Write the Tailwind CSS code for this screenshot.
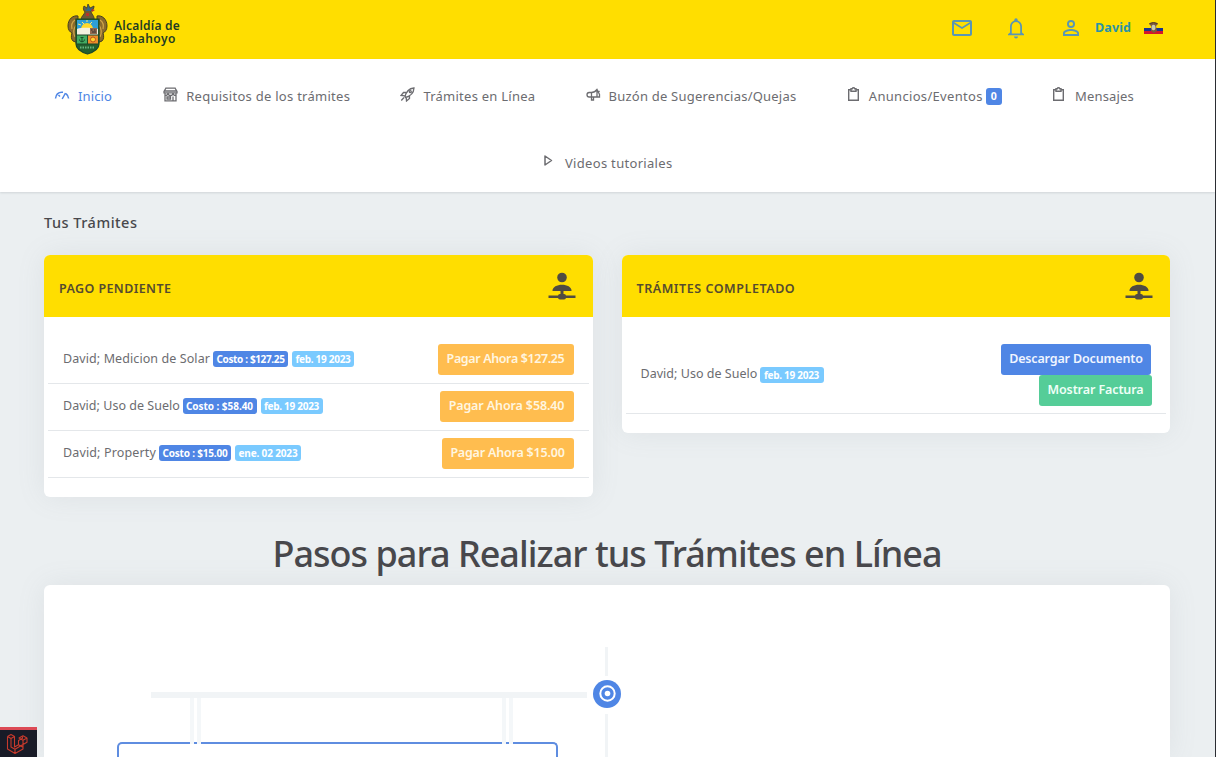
<!DOCTYPE html>
<html lang="es">
<head>
<meta charset="utf-8">
<title>Alcaldía de Babahoyo</title>
<script src="https://cdn.jsdelivr.net/npm/@tailwindcss/browser@4"></script>
</head>
<body class="w-[1216px] h-[757px] overflow-hidden bg-[#ebeff1] border-r border-[#2b2d33] font-['Noto_Sans',sans-serif] text-[#6c6c70] relative whitespace-nowrap">
<header class="h-[59px] bg-[#ffde00] flex items-center pl-[67px] pr-[52px] justify-between">
  <div class="flex items-center h-full">
    <svg class="w-[41px] h-[52px] -mt-[2px]" viewBox="0 0 41 52">
      <path d="M11 13C6 12 1 16 1 23c0 4 2 6 4 7-1 3-1 6 1 8l5 2V20zM30 13c5-1 10 3 10 10 0 4-2 6-4 7 1 3 1 6-1 8l-5 2V20z" fill="#8a6a2c" stroke="#46401f" stroke-width="1"/>
      <path d="M8 17c-3 2-4 5-3 9M9 22c-2 3-3 8-1 12M33 17c3 2 4 5 3 9M32 22c2 3 3 8 1 12" fill="none" stroke="#d0a649" stroke-width="1.2"/>
      <path d="M14 17c0-4 3-5 4-8-2-2-2-4-1-6l3 2 1-4 2 4 4-2c0 3-1 4-3 5 0 3 4 5 3 9z" fill="#6d5a35" stroke="#3c3826" stroke-width=".8"/>
      <path d="M17 4l3 3 1-5 2 4 3-2-2 4h-5z" fill="#2d6a8d"/><path d="M24 6l4 1-3 2zM19 10h3v3h-3z" fill="#b8332a"/>
      <path d="M9 16h23v25c0 5-5 8-11.500 10C14 49 9 46 9 41z" fill="#23602f" stroke="#1d4729" stroke-width="1.200"/>
      <path d="M10 17h21v14H10z" fill="#2d9fd7"/>
      <path d="M14 26a6 6 0 0 1 12 0z" fill="#ffd92b"/><path d="M15 19l2 2M11 21l3 1M20 17v2M25 19l-2 2" stroke="#ffe674" stroke-width="1"/>
      <path d="M10 26c6-2 14-1 21 0v6H10z" fill="#f3f0df"/><path d="M23 25h7v6h-7z" fill="#91694f"/><path d="M24 27h1.500M27 27h1.500M25 29h4" stroke="#333"/>
      <path d="M10 32h10.500v9H10z" fill="#42ac62"/><path d="M21 32h10v9H21z" fill="#ee8c2a"/>
      <circle cx="26" cy="36.500" r="2.500" fill="#ffd22d" stroke="#b5541b"/>
      <path d="M15 34v5M12.500 36.500c0 3 5 3 5 0M13.500 34.500h3" fill="none" stroke="#174c27"/>
      <path d="M9.500 32h22M20.500 32v9M9.500 41h22" stroke="#1d4729"/>
      <path d="M13 44.500h15" stroke="#69b580" stroke-width="2" stroke-dasharray="1.500 1"/>
    </svg>
    <div class="ml-[6px] mt-[5px] text-[12px] leading-[13px] font-semibold text-[#1f3d24]">
      <div class="tracking-[0.23px]">Alcaldía de</div>
      <div class="tracking-[0.44px]">Babahoyo</div>
    </div>
  </div>
  <div class="flex items-center h-full pb-[4px] text-[#5a96b4]">
    <svg class="size-6 mr-[30px]" viewBox="0 0 24 24" fill="currentColor"><path d="M22 6c0-1.100-.9-2-2-2H4c-1.100 0-2 .9-2 2v12c0 1.100.9 2 2 2h16c1.100 0 2-.9 2-2V6zm-2 0l-8 5-8-5h16zm0 12H4V8l8 5 8-5v10z"/></svg>
    <svg class="size-6 mr-[31px]" viewBox="0 0 24 24" fill="currentColor"><path d="M10 20.500h4a2 2 0 0 1-4 0zm10-2.300v1H4v-1l2-1.800v-5.800c0-3 1.800-5.400 4.300-6.200V4a1.700 1.700 0 0 1 3.400 0v.4c2.500.8 4.300 3.200 4.300 6.200v5.800zm-3.800-7.600a4.200 4.600 0 0 0-8.400 0v6.900h8.400v-6.900z"/></svg>
    <svg class="size-6 mr-[12px]" viewBox="0 0 24 24" fill="currentColor"><path d="M12 4a4 4 0 1 1 0 8 4 4 0 0 1 0-8zm0 1.900a2.100 2.100 0 1 0 0 4.200 2.100 2.100 0 0 0 0-4.200zM12 13c2.700 0 8 1.300 8 4v3H4v-3c0-2.700 5.300-4 8-4zm0 1.900c-3 0-6.100 1.500-6.100 2.100v1.100h12.200V17c0-.6-3.100-2.100-6.100-2.100z"/></svg>
    <span class="w-[49px] text-[12.5px] leading-4 font-bold tracking-[0.12px] text-[#2a93a6]">David</span>
    <svg class="w-[19px] h-[14px] mt-[1px]" viewBox="0 0 19 14"><path d="M0 7h19v4H0z" fill="#17348f"/><path d="M0 10h19v3H0z" fill="#d3162d"/><path d="M5 3c1-2 8-2 9 0l-2 2 1 5-3 2-3-2V5z" fill="#7c5b3b"/><ellipse cx="9.500" cy="6.500" rx="2" ry="2.800" fill="#c8cbb3"/><path d="M5.500 2.500L9.500 1.500l4 1" stroke="#4c3526" fill="none"/></svg>
  </div>
</header>

<nav class="h-[133px] bg-white shadow-[0_1px_2px_rgba(56,65,74,.15)] text-[13px] leading-5">
  <div class="h-[74px] flex items-center justify-between pl-[54px] pr-[80px]">
    <a class="flex items-center text-[#4f86e5]">
      <svg class="w-4 h-4 mr-2 -mt-[3px]" viewBox="0 0 16 16" fill="none" stroke="currentColor" stroke-width="1.500"><path d="M1.500 11.500C2 7 5 4.800 9 5.200M12 6.600c1.500 1.200 2.400 2.800 2.600 4.900M4.500 8l1.500 1.500M8.200 12l3.300-6"/></svg>
      <span class="w-[34px] tracking-[0.12px]">Inicio</span></a>
    <a class="flex items-center ml-px">
      <svg class="w-[15px] h-[15px] mr-2 -mt-[3px]" viewBox="0 0 15 15" fill="none" stroke="currentColor" stroke-width="1.300"><path d="M2.500 1.200h10M3 1L1 4.500v1.300h13V4.500L12 1M1 4h13M2 6v7.800h11V6M2 8.500c2 0 3-1 3-2.500 0 1.500 1 2.500 2.500 2.500S10 7.500 10 6c0 1.500 1 2.500 3 2.500M4 10h3.500v2H4zM10 13.500v-4"/></svg>
      <span class="w-[164px] tracking-[0.27px]">Requisitos de los trámites</span></a>
    <a class="flex items-center">
      <svg class="w-[15px] h-[15px] mr-[8px] -mt-[3px]" viewBox="0 0 15 15" fill="none" stroke="currentColor" stroke-width="1.300"><path d="M5 9.800C6 5 9 1.500 14 1c-.3 5-3.800 8.200-8.500 9.500zM6 5.500H3.500L1 8.500l4 .3M9.500 9v2.500L6.500 14l-.3-3.500M4 10.500L1.300 13.500"/><circle cx="10.300" cy="4.700" r="1"/></svg>
      <span class="w-[112px] tracking-[0.25px]">Trámites en Línea</span></a>
    <a class="flex items-center">
      <svg class="w-[15px] h-[14px] mr-[8px] -mt-[3px]" viewBox="0 0 15 14" fill="none" stroke="currentColor" stroke-width="1.300"><path d="M5.500 4.500H3.200C1.800 4.500 1 5.500 1 6.800S1.800 9 3.200 9h10.300V6.500L11 1.500C9.500 3.500 7.800 4.500 5.500 4.500zM5.500 4.500V12h2V9M11 1.500V9M12.500 4l1-1"/></svg>
      <span class="w-[188px] tracking-[0.22px]">Buzón de Sugerencias/Quejas</span></a>
    <a class="flex items-center">
      <svg class="w-[13px] h-[15px] mr-[9px] -mt-[3px]" viewBox="0 0 13 15" fill="none" stroke="currentColor" stroke-width="1.400"><path d="M4 2.700H1.700v10.600h9.600V2.700H9M4 1.700h1.300c.3-1.200 2.100-1.200 2.400 0H9v2.600H4z"/></svg>
      <span class="w-[117px] tracking-[0.32px]">Anuncios/Eventos</span>
      <span class="w-4 h-[17px] rounded-[3px] bg-[#4f86e5] text-white text-[10.5px] leading-[17px] font-bold text-center mt-px">0</span></a>
    <a class="flex items-center">
      <svg class="w-[13px] h-[15px] mr-[10px] -mt-[3px]" viewBox="0 0 13 15" fill="none" stroke="currentColor" stroke-width="1.400"><path d="M4 2.700H1.700v10.600h9.600V2.700H9M4 1.700h1.300c.3-1.200 2.100-1.200 2.400 0H9v2.600H4z"/></svg>
      <span class="w-[60px] tracking-[0.18px]">Mensajes</span></a>
  </div>
  <div class="h-[59px] flex items-center pl-[543px]">
    <svg class="w-[11px] h-[13px] mr-[11px] -mt-[4px]" viewBox="0 0 11 13" fill="none" stroke="currentColor" stroke-width="1.500" stroke-linejoin="round"><path d="M2 2v9l6.500-4.500z"/></svg>
    <span class="tracking-[0.31px]">Videos tutoriales</span>
  </div>
</nav>

<main class="pl-[44px] pr-[45px]">
  <h4 class="h-[63px] flex items-center pb-[2px] text-[14.5px] font-medium tracking-[0.5px] text-[#48484c]">Tus Trámites</h4>
  <div class="grid grid-cols-2 gap-[29px] items-start text-[12.5px] leading-5">
    <section class="h-[242px] rounded-[6px] bg-white overflow-hidden shadow-[0_0_28px_rgba(130,138,150,.12)]">
      <div class="h-[62px] bg-[#ffde00] flex items-center justify-between pl-[15px] pr-[17px] text-[#554b2f]">
        <h5 class="mt-[5px] font-semibold tracking-[0.4px]">PAGO PENDIENTE</h5>
        <svg class="w-[28px] h-[28px] text-[#504c42]" viewBox="0 0 28 28" fill="currentColor"><circle cx="14" cy="5.500" r="4.800"/><path d="M4.500 18.500C4.500 15 9 12.700 14 12.700s9.500 2.300 9.500 5.800v.5h-19zM12.500 18h3v5h-3zM.5 23.500h27v2.500H.5z"/><rect x="10" y="22" width="8" height="5.500" rx="2"/></svg>
      </div>
      <div class="mt-[20px] mx-[4px]">
        <div class="h-[47px] border-b border-[#e4e7ea] flex items-start pt-[7px] pl-[15px] pr-[15px]">
          <span class="w-[150px] mt-[5px] tracking-[0.09px]">David; Medicion de Solar</span>
          <span class="w-[75px] h-4 mt-[7px] mr-[4px] rounded-[3px] bg-[#4f86e5] text-white text-[10px] leading-4 font-bold text-center tracking-[-0.36px]">Costo : $127.25</span>
          <span class="w-[62px] h-4 mt-[7px] rounded-[3px] bg-[#7acaff] text-white text-[10px] leading-4 font-bold text-center tracking-[-0.29px]">feb. 19 2023</span>
          <button class="ml-auto w-[136px] h-[31px] rounded-[3px] bg-[#ffbd4f] text-[#fff6e0] font-semibold leading-[29px] pb-[2px] tracking-[-0.38px]">Pagar Ahora $127.25</button>
        </div>
        <div class="h-[47px] border-b border-[#e4e7ea] flex items-start pt-[7px] pl-[15px] pr-[15px]">
          <span class="w-[119.5px] mt-[5px] tracking-[0.03px]">David; Uso de Suelo</span>
          <span class="w-[74px] h-4 mt-[7px] mr-[4px] rounded-[3px] bg-[#4f86e5] text-white text-[10px] leading-4 font-bold text-center tracking-[-0.05px]">Costo : $58.40</span>
          <span class="w-[62px] h-4 mt-[7px] rounded-[3px] bg-[#7acaff] text-white text-[10px] leading-4 font-bold text-center tracking-[-0.29px]">feb. 19 2023</span>
          <button class="ml-auto w-[134px] h-[31px] rounded-[3px] bg-[#ffbd4f] text-[#fff6e0] font-semibold leading-[29px] pb-[2px] tracking-[-0.12px]">Pagar Ahora $58.40</button>
        </div>
        <div class="h-[47px] border-b border-[#e4e7ea] flex items-start pt-[7px] pl-[15px] pr-[15px]">
          <span class="w-[96px] mt-[5px] tracking-[0.14px]">David; Property</span>
          <span class="w-[72px] h-4 mt-[7px] mr-[4px] rounded-[3px] bg-[#4f86e5] text-white text-[10px] leading-4 font-bold text-center tracking-[-0.19px]">Costo : $15.00</span>
          <span class="w-[66px] h-4 mt-[7px] rounded-[3px] bg-[#7acaff] text-white text-[10px] leading-4 font-bold text-center tracking-[-0.15px]">ene. 02 2023</span>
          <button class="ml-auto w-[132px] h-[31px] rounded-[3px] bg-[#ffbd4f] text-[#fff6e0] font-semibold leading-[29px] pb-[2px] tracking-[-0.2px]">Pagar Ahora $15.00</button>
        </div>
      </div>
    </section>
    <section class="h-[178px] rounded-[6px] bg-white overflow-hidden shadow-[0_0_28px_rgba(130,138,150,.12)]">
      <div class="h-[62px] bg-[#ffde00] flex items-center justify-between pl-[15px] pr-[17px] text-[#554b2f]">
        <h5 class="mt-[5px] font-semibold tracking-[0.55px]">TRÁMITES COMPLETADO</h5>
        <svg class="w-[28px] h-[28px] text-[#504c42]" viewBox="0 0 28 28" fill="currentColor"><circle cx="14" cy="5.500" r="4.800"/><path d="M4.500 18.500C4.500 15 9 12.700 14 12.700s9.500 2.300 9.500 5.800v.5h-19zM12.500 18h3v5h-3zM.5 23.500h27v2.500H.5z"/><rect x="10" y="22" width="8" height="5.500" rx="2"/></svg>
      </div>
      <div class="mt-[20px] mx-[4px] h-[77px] border-b border-[#e4e7ea] flex items-start pt-[7px] pl-[15px] pr-[14px]">
        <span class="w-[119px] mt-[20px] tracking-[0.03px]">David; Uso de Suelo</span>
        <span class="w-[64px] h-4 mt-[23px] rounded-[3px] bg-[#7acaff] text-white text-[10px] leading-4 font-bold text-center tracking-[-0.29px]">feb. 19 2023</span>
        <div class="ml-auto flex flex-col items-end">
          <button class="w-[150px] h-[31px] mr-px rounded-[3px] bg-[#4f86e5] text-[#f0f5ff] font-semibold leading-[29px] pb-[2px] tracking-[-0.15px]">Descargar Documento</button>
          <button class="w-[113px] h-[31px] rounded-[3px] bg-[#55cd98] text-[#effff7] font-semibold leading-[29px] pb-[2px] tracking-[-0.1px]">Mostrar Factura</button>
        </div>
      </div>
    </section>
  </div>
  <h1 class="mt-[26px] h-[62px] flex items-center justify-center text-[36px] font-medium tracking-[-0.98px] text-[#48484c]">Pasos para Realizar tus Trámites en Línea</h1>
  <section class="relative h-[172px] rounded-t-[6px] bg-white shadow-[0_0_28px_rgba(130,138,150,.12)]">
    <!-- timeline rail -->
    <div class="absolute left-[561px] top-[62px] w-[3px] h-[29px] bg-[#f1f4f6]"></div>
    <div class="absolute left-[561px] top-[129px] w-[3px] h-[43px] bg-[#f1f4f6]"></div>
    <svg class="absolute left-[549px] top-[95px] w-[28px] h-[28px]" viewBox="0 0 28 28"><circle cx="14" cy="14" r="14" fill="#4f86e5"/><circle cx="14.500" cy="13.500" r="7.200" fill="none" stroke="#fff" stroke-width="2"/><circle cx="14.500" cy="13.500" r="2.800" fill="#fff"/></svg>
    <!-- hanging sign -->
    <div class="absolute left-[107px] top-[107px] w-[436px] h-[6px] bg-[#f1f4f6]"></div>
    <div class="absolute left-[73px] top-[157px] w-[441px] h-[15px] rounded-t-[5px] border-2 border-b-0 border-[#5f8de0]"></div>
    <div class="absolute left-[146px] top-[113px] w-[11px] h-[46px] border-x-4 border-[#f4f7f9]"></div>
    <div class="absolute left-[458px] top-[113px] w-[11px] h-[46px] border-x-4 border-[#f4f7f9]"></div>
  </section>
</main>

<div class="absolute left-0 bottom-0 w-[37px] h-[30px] bg-[#181b27] border-t-[3px] border-[#dc4a55] pl-[6px] pt-[3px]">
  <svg class="w-[23px] h-[22px]" viewBox="0 0 23 22" fill="none" stroke="#c73a2c" stroke-width="1.100" stroke-linejoin="round"><path d="M1.500 3.500L5 1.500l3.500 2V14l4-2.300V7.500l4-2.200V3.800M1.500 3.500V16l7.500 4.500 8-4.500v-4.500M1.500 3.500L5 5.500l3.500-2M5 5.500V14l4 2.300M9 20.500v-4.200l8-4.800 4-2.300V5L17 7.300 13 5l4-2.300L21 5M17 7.300v4.200M12.500 11.700l4.500 2.500"/></svg>
</div>
</body>
</html>
